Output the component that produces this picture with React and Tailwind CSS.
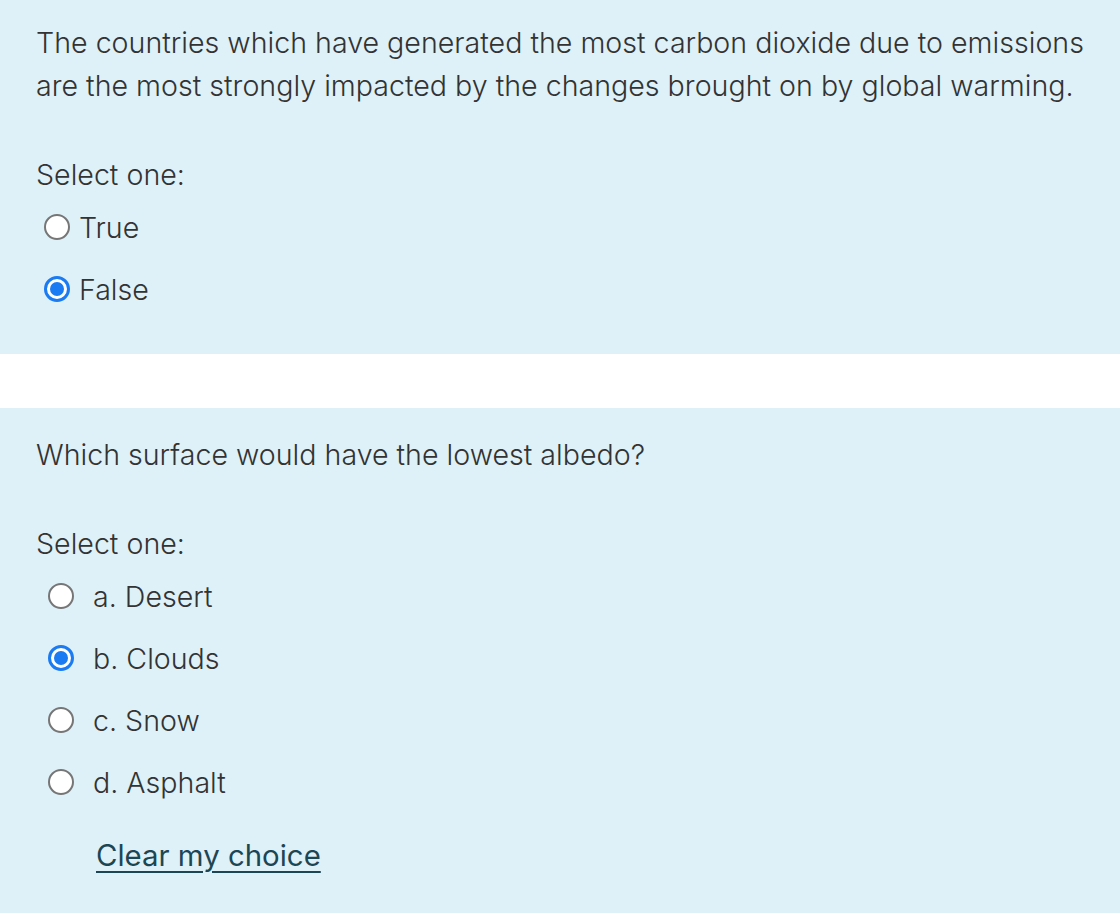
import { useState } from 'react';

function Radio({ checked }) {
  return checked ? (
    <span className="flex h-[26px] w-[26px] shrink-0 items-center justify-center rounded-full border-[3px] border-[#1a7bf2] bg-white">
      <span className="h-[14px] w-[14px] rounded-full bg-[#1a7bf2]" />
    </span>
  ) : (
    <span className="h-[26px] w-[26px] shrink-0 rounded-full border-2 border-[#767676] bg-white" />
  );
}

function Option({ label, checked, onClick, wide }) {
  return (
    <label onClick={onClick} className={`flex h-[62px] cursor-pointer items-center ${wide ? 'pl-[12px]' : 'pl-[8px]'}`}>
      <Radio checked={checked} />
      <span className={wide ? 'ml-[19px]' : 'ml-[9px]'}>{label}</span>
    </label>
  );
}

export default function App() {
  const [q1, setQ1] = useState('False');
  const [q2, setQ2] = useState('b');

  const choices = [
    ['a', 'a. Desert'],
    ['b', 'b. Clouds'],
    ['c', 'c. Snow'],
    ['d', 'd. Asphalt'],
  ];

  return (
    <div className="min-h-screen bg-white text-[28.6px] font-light leading-[43px] text-[#333333]" style={{ fontFamily: 'Inter, "Liberation Sans", sans-serif' }}>
      <div className="bg-[#def1f8] px-[36px] pb-[34px] pt-[21px]">
        <p>
          The countries which have generated the most carbon dioxide due to emissions are the most strongly impacted by
          the changes brought on by global warming.
        </p>
        <div className="mt-[46px]">Select one:</div>
        <div>
          {['True', 'False'].map((v) => (
            <Option key={v} label={v} checked={q1 === v} onClick={() => setQ1(v)} />
          ))}
        </div>
      </div>

      <div className="mt-[54px] bg-[#def1f8] px-[36px] pb-[36px] pt-[25px]">
        <p>Which surface would have the lowest albedo?</p>
        <div className="mt-[46px]">Select one:</div>
        <div>
          {choices.map(([k, label]) => (
            <Option key={k} label={label} wide checked={q2 === k} onClick={() => setQ2(k)} />
          ))}
        </div>
        <div className="mt-[21px] pl-[60px]">
          <a href="#" onClick={(e) => { e.preventDefault(); setQ2(''); }} className="text-[29.4px] font-normal text-[#1d4654] underline decoration-2 underline-offset-[5px]">
            Clear my choice
          </a>
        </div>
      </div>
    </div>
  );
}
